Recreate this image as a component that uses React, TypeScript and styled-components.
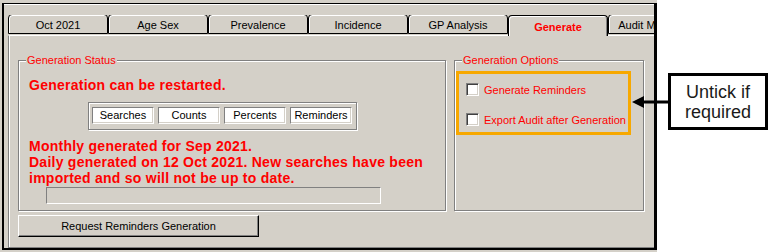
import React, { FC } from 'react';
import styled, { createGlobalStyle } from 'styled-components';

const GlobalStyle = createGlobalStyle`
    html, body {
        margin: 0;
        padding: 0;
        background: #fff;
    }
    body {
        font-family: "Liberation Sans", Arial, sans-serif;
    }
    * {
        box-sizing: border-box;
    }
`;

const FACE = '#d4d0c8';
const SHADOW = '#808080';
const RED = '#ff0000';

const Page = styled.div`
    position: relative;
    width: 773px;
    height: 252px;
    background: #fff;
    overflow: hidden;
`;

const Window = styled.div`
    width: 657px;
    height: 252px;
    background: ${FACE};
    padding: 3px 0 2px 0;
`;

const Frame = styled.div`
    height: 100%;
    margin-left: 2px;
    border-top: 1px solid #000;
    border-left: 2px solid #000;
    border-right: 3px solid #000;
    border-bottom: 2px solid #000;
    box-shadow: inset 0 1px 0 #fff;
    padding: 11px 0 0 4px;
    display: flex;
    flex-direction: column;
`;

const TabStrip = styled.div`
    display: flex;
    align-items: flex-end;
    height: 21px;
    overflow: hidden;
    position: relative;
    z-index: 1;
    margin-bottom: -1px;
    padding-bottom: 1px;
`;

const Tab = styled.div<{ $active?: boolean }>`
    flex: 0 0 100px;
    height: ${(p) => (p.$active ? '21px' : '20px')};
    margin-bottom: ${(p) => (p.$active ? '-1px' : '1px')};
    display: flex;
    align-items: center;
    justify-content: center;
    font-size: 11px;
    font-weight: ${(p) => (p.$active ? 700 : 400)};
    color: ${(p) => (p.$active ? RED : '#000')};
    background: ${FACE};
    border: 1px solid #000;
    border-bottom: ${(p) => (p.$active ? 'none' : '1px solid #000')};
    border-radius: 4px 4px 0 0;
    box-shadow: inset 1px 1px 0 #fff ${(p) => (p.$active ? `, inset -1px 0 0 ${SHADOW}` : '')};
    white-space: nowrap;
    padding-top: ${(p) => (p.$active ? '2px' : '1px')};
`;

const Panel = styled.div`
    flex: 1;
    border-top: 1px solid #fff;
    border-left: 1px solid ${SHADOW};
    border-bottom: 1px solid ${SHADOW};
    box-shadow: inset 1px 0 0 #fff;
    padding: 18px 0 0 9px;
`;

const GroupRow = styled.div`
    display: flex;
    gap: 8px;
`;

const GroupBox = styled.fieldset<{ $width: number }>`
    margin: 0;
    width: ${(p) => p.$width}px;
    height: 157px;
    border: 1px solid ${SHADOW};
    box-shadow: inset 1px 1px 0 #fff, 1px 1px 0 #fff;
    padding: 10px 0 0 7px;
    min-width: 0;
`;

const OptionsBox = styled(GroupBox)`
    padding: 4px 0 0 1px;
`;

const Legend = styled.legend<{ $shift?: number }>`
    padding: 0 1px;
    margin-left: ${(p) => p.$shift ?? 0}px;
    font-size: 11px;
    line-height: 13px;
    color: ${RED};
    background: ${FACE};
`;

const Headline = styled.div`
    margin-left: 3px;
    font-size: 14px;
    font-weight: 700;
    line-height: 16px;
    color: ${RED};
    letter-spacing: 0.25px;
`;

const ViewSwitch = styled.div`
    display: flex;
    gap: 4px;
    width: 269px;
    height: 28px;
    margin: 9px 0 0 62px;
    padding: 4px 3px;
    border: 1px solid ${SHADOW};
    box-shadow: inset 1px 1px 0 #fff, 1px 1px 0 #fff;
`;

const ViewButton = styled.div`
    width: 62px;
    height: 17px;
    background: #fff;
    border: 1px solid;
    border-color: ${SHADOW} #fff #fff ${SHADOW};
    box-shadow: inset -1px -1px 0 ${FACE};
    font-size: 11px;
    line-height: 15px;
    text-align: center;
    color: #000;
`;

const Messages = styled(Headline)`
    margin-top: 8px;
`;

const Progress = styled.div`
    width: 335px;
    height: 17px;
    margin: 1px 0 0 20px;
    border: 1px solid;
    border-color: ${SHADOW} #fff #fff ${SHADOW};
`;

const PushButton = styled.div`
    width: 241px;
    height: 22px;
    margin-top: 4px;
    background: ${FACE};
    border: 1px solid;
    border-color: #fff #000 #000 #fff;
    box-shadow: inset -1px -1px 0 ${SHADOW};
    font-size: 11px;
    line-height: 20px;
    text-align: center;
    color: #000;
`;

const Highlight = styled.div`
    width: 175px;
    height: 64px;
    border: 3px solid #f7a800;
    padding: 9px 0 0 7px;
    display: flex;
    flex-direction: column;
    gap: 17px;
`;

const CheckRow = styled.label`
    display: flex;
    align-items: center;
    gap: 5px;
    height: 13px;
    font-size: 11px;
    color: ${RED};
    white-space: nowrap;
`;

const CheckBox = styled.span`
    flex: 0 0 13px;
    height: 13px;
    background: #fff;
    border: 1px solid;
    border-color: ${SHADOW} #fff #fff ${SHADOW};
    box-shadow: inset 1px 1px 0 #404040, inset -1px -1px 0 ${FACE};
`;

const Callout = styled.div`
    position: absolute;
    left: 632px;
    top: 73px;
    display: flex;
    align-items: center;
`;

const CalloutBox = styled.div`
    width: 100px;
    height: 57px;
    border: 3px solid #000;
    background: #fff;
    display: flex;
    flex-direction: column;
    align-items: center;
    justify-content: center;
    font-size: 18px;
    line-height: 20px;
    color: #1a1a1a;
`;

const tabs = ['Oct 2021', 'Age Sex', 'Prevalence', 'Incidence', 'GP Analysis', 'Generate', 'Audit Monitoring'];
const views = ['Searches', 'Counts', 'Percents', 'Reminders'];

const App: FC = () => (
    <Page>
        <GlobalStyle />
        <Window>
            <Frame>
                <TabStrip>
                    {tabs.map((t) => (
                        <Tab key={t} $active={t === 'Generate'}>
                            {t}
                        </Tab>
                    ))}
                </TabStrip>
                <Panel>
                    <GroupRow>
                        <GroupBox $width={428}>
                            <Legend>Generation Status</Legend>
                            <Headline>Generation can be restarted.</Headline>
                            <ViewSwitch>
                                {views.map((v) => (
                                    <ViewButton key={v}>{v}</ViewButton>
                                ))}
                            </ViewSwitch>
                            <Messages>
                                Monthly generated for Sep 2021.
                                <br />
                                Daily generated on 12 Oct 2021. New searches have been
                                <br />
                                imported and so will not be up to date.
                            </Messages>
                            <Progress />
                        </GroupBox>
                        <OptionsBox $width={190}>
                            <Legend $shift={6}>Generation Options</Legend>
                            <Highlight>
                                <CheckRow>
                                    <CheckBox />
                                    Generate Reminders
                                </CheckRow>
                                <CheckRow>
                                    <CheckBox />
                                    Export Audit after Generation
                                </CheckRow>
                            </Highlight>
                        </OptionsBox>
                    </GroupRow>
                    <PushButton>Request Reminders Generation</PushButton>
                </Panel>
            </Frame>
        </Window>
        <Callout>
            <svg width="36" height="14" viewBox="0 0 36 14">
                <polygon points="0,7 12,1 12,13" fill="#000" />
                <rect x="11" y="5.5" width="25" height="3" fill="#000" />
            </svg>
            <CalloutBox>
                <span>Untick if</span>
                <span>required</span>
            </CalloutBox>
        </Callout>
    </Page>
);

export default App;
